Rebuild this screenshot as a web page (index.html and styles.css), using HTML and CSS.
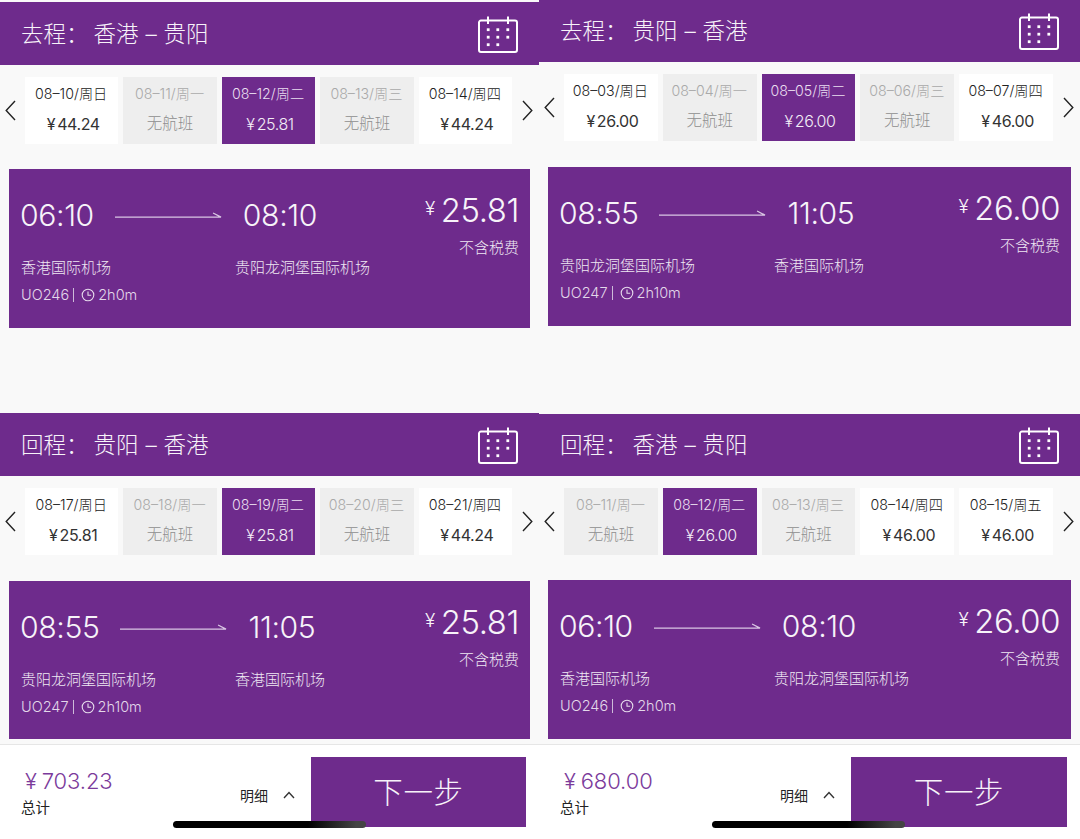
FILE: index.html
```html
<!DOCTYPE html>
<html lang="zh-CN">
<head>
<meta charset="utf-8">
<title>选择航班</title>
<link rel="stylesheet" href="styles.css">
</head>
<body>
<svg class="defs" width="0" height="0" aria-hidden="true">
  <symbol id="cal" viewBox="0 0 40 37">
    <path d="M3 4.5H37A2 2 0 0 1 39 6.5V34A2 2 0 0 1 37 36H3A2 2 0 0 1 1 34V6.5A2 2 0 0 1 3 4.5Z" fill="none" stroke="#fff" stroke-width="2"/>
    <path d="M10 0.5V8M30 0.5V8" stroke="#fff" stroke-width="2" fill="none"/>
    <g fill="#fff"><rect x="8.8" y="12.3" width="2.8" height="2.8"/><rect x="18.4" y="12.3" width="2.8" height="2.8"/><rect x="28.4" y="12.3" width="2.8" height="2.8"/><rect x="8.8" y="19.8" width="2.8" height="2.8"/><rect x="18.4" y="19.8" width="2.8" height="2.8"/><rect x="28.4" y="19.8" width="2.8" height="2.8"/><rect x="8.8" y="27.3" width="2.8" height="2.8"/><rect x="18.4" y="27.3" width="2.8" height="2.8"/></g>
  </symbol>
  <symbol id="left" viewBox="0 0 11 21"><path d="M10 1L1.2 10.5L10 20" fill="none" stroke="#222" stroke-width="1.4"/></symbol>
  <symbol id="right" viewBox="0 0 11 21"><path d="M1 1L9.8 10.5L1 20" fill="none" stroke="#222" stroke-width="1.4"/></symbol>
  <symbol id="arrow" viewBox="0 0 108 8"><path d="M0 6.2H107L99 2" fill="none" stroke="#d9c6e3" stroke-width="1.3"/></symbol>
  <symbol id="clock" viewBox="0 0 14 14"><circle cx="7" cy="7" r="5.8" fill="none" stroke="#e6dcec" stroke-width="1.1"/><path d="M7 3.4V7.3H10.2" fill="none" stroke="#e6dcec" stroke-width="1.1"/></symbol>
  <symbol id="up" viewBox="0 0 12 8"><path d="M1 7L6 1.6L11 7" fill="none" stroke="#333" stroke-width="1.4"/></symbol>
</svg>

<div class="screen">

<section class="panel panel-a">
  <div class="main">
    <div class="leg leg-first">
      <div class="head head-tall"><span class="route"><span class="route-kind">去程：</span>香港 – 贵阳</span><svg class="cal"><use href="#cal"/></svg></div>
      <div class="dates">
        <svg class="chev"><use href="#left"/></svg>
        <div class="days">
          <div class="day"><div class="d">08–10/周日</div><div class="p">¥ 44.24</div></div>
          <div class="day off"><div class="d">08–11/周一</div><div class="n">无航班</div></div>
          <div class="day on"><div class="d">08–12/周二</div><div class="p">¥ 25.81</div></div>
          <div class="day off"><div class="d">08–13/周三</div><div class="n">无航班</div></div>
          <div class="day"><div class="d">08–14/周四</div><div class="p">¥ 44.24</div></div>
        </div>
        <svg class="chev"><use href="#right"/></svg>
      </div>
      <div class="card">
        <div class="info">
          <div class="times"><span class="t">06:10</span><svg class="arrow"><use href="#arrow"/></svg><span class="t">08:10</span></div>
          <div class="ports"><span>香港国际机场</span><span>贵阳龙洞堡国际机场</span></div>
          <div class="flight"><span>UO246</span><i class="bar"></i><svg class="clock"><use href="#clock"/></svg><span>2h0m</span></div>
        </div>
        <div class="fare"><div class="amount"><span class="yen">¥</span>25.81</div><div class="tax">不含税费</div></div>
      </div>
    </div>
    <div class="leg">
      <div class="head head-tall"><span class="route"><span class="route-kind">回程：</span>贵阳 – 香港</span><svg class="cal"><use href="#cal"/></svg></div>
      <div class="dates">
        <svg class="chev"><use href="#left"/></svg>
        <div class="days">
          <div class="day"><div class="d">08–17/周日</div><div class="p">¥ 25.81</div></div>
          <div class="day off"><div class="d">08–18/周一</div><div class="n">无航班</div></div>
          <div class="day on"><div class="d">08–19/周二</div><div class="p">¥ 25.81</div></div>
          <div class="day off"><div class="d">08–20/周三</div><div class="n">无航班</div></div>
          <div class="day"><div class="d">08–21/周四</div><div class="p">¥ 44.24</div></div>
        </div>
        <svg class="chev"><use href="#right"/></svg>
      </div>
      <div class="card card-short">
        <div class="info">
          <div class="times"><span class="t">08:55</span><svg class="arrow"><use href="#arrow"/></svg><span class="t">11:05</span></div>
          <div class="ports"><span>贵阳龙洞堡国际机场</span><span>香港国际机场</span></div>
          <div class="flight"><span>UO247</span><i class="bar"></i><svg class="clock"><use href="#clock"/></svg><span>2h10m</span></div>
        </div>
        <div class="fare"><div class="amount"><span class="yen">¥</span>25.81</div><div class="tax">不含税费</div></div>
      </div>
    </div>
  </div>
  <div class="foot">
    <div class="total"><div class="sum">¥ 703.23</div><div class="sum-label">总计</div></div>
    <div class="detail"><span>明细</span><svg class="up"><use href="#up"/></svg></div>
    <div class="next">下一步</div>
  </div>
  <div class="home"></div>
</section>

<section class="panel panel-b">
  <div class="main">
    <div class="leg">
      <div class="head"><span class="route"><span class="route-kind">去程：</span>贵阳 – 香港</span><svg class="cal"><use href="#cal"/></svg></div>
      <div class="dates">
        <svg class="chev"><use href="#left"/></svg>
        <div class="days">
          <div class="day"><div class="d">08–03/周日</div><div class="p">¥ 26.00</div></div>
          <div class="day off"><div class="d">08–04/周一</div><div class="n">无航班</div></div>
          <div class="day on"><div class="d">08–05/周二</div><div class="p">¥ 26.00</div></div>
          <div class="day off"><div class="d">08–06/周三</div><div class="n">无航班</div></div>
          <div class="day"><div class="d">08–07/周四</div><div class="p">¥ 46.00</div></div>
        </div>
        <svg class="chev"><use href="#right"/></svg>
      </div>
      <div class="card card-low">
        <div class="info">
          <div class="times"><span class="t">08:55</span><svg class="arrow"><use href="#arrow"/></svg><span class="t">11:05</span></div>
          <div class="ports"><span>贵阳龙洞堡国际机场</span><span>香港国际机场</span></div>
          <div class="flight"><span>UO247</span><i class="bar"></i><svg class="clock"><use href="#clock"/></svg><span>2h10m</span></div>
        </div>
        <div class="fare"><div class="amount"><span class="yen">¥</span>26.00</div><div class="tax">不含税费</div></div>
      </div>
    </div>
    <div class="leg">
      <div class="head"><span class="route"><span class="route-kind">回程：</span>香港 – 贵阳</span><svg class="cal"><use href="#cal"/></svg></div>
      <div class="dates">
        <svg class="chev"><use href="#left"/></svg>
        <div class="days">
          <div class="day off"><div class="d">08–11/周一</div><div class="n">无航班</div></div>
          <div class="day on"><div class="d">08–12/周二</div><div class="p">¥ 26.00</div></div>
          <div class="day off"><div class="d">08–13/周三</div><div class="n">无航班</div></div>
          <div class="day"><div class="d">08–14/周四</div><div class="p">¥ 46.00</div></div>
          <div class="day"><div class="d">08–15/周五</div><div class="p">¥ 46.00</div></div>
        </div>
        <svg class="chev"><use href="#right"/></svg>
      </div>
      <div class="card">
        <div class="info">
          <div class="times"><span class="t">06:10</span><svg class="arrow"><use href="#arrow"/></svg><span class="t">08:10</span></div>
          <div class="ports"><span>香港国际机场</span><span>贵阳龙洞堡国际机场</span></div>
          <div class="flight"><span>UO246</span><i class="bar"></i><svg class="clock"><use href="#clock"/></svg><span>2h0m</span></div>
        </div>
        <div class="fare"><div class="amount"><span class="yen">¥</span>26.00</div><div class="tax">不含税费</div></div>
      </div>
    </div>
  </div>
  <div class="foot">
    <div class="total"><div class="sum">¥ 680.00</div><div class="sum-label">总计</div></div>
    <div class="detail"><span>明细</span><svg class="up"><use href="#up"/></svg></div>
    <div class="next">下一步</div>
  </div>
  <div class="home"></div>
</section>

</div>
</body>
</html>
```

FILE: styles.css
```css
* { box-sizing: border-box; }
html, body { margin: 0; padding: 0; }
body {
  width: 1080px;
  height: 839px;
  overflow: hidden;
  background: #fff;
  font-family: Inter, "Noto Sans CJK SC", sans-serif;
  font-weight: 300;
  color: #222;
}
.defs { position: absolute; }
.screen { display: grid; grid-template-columns: 539px 541px; height: 839px; }
.panel { position: relative; display: flex; flex-direction: column; height: 839px; background: #f9f9f9; }
.panel-a .leg-first { padding-top: 2px; background: #f9f9f9; }
.main { height: 744px; padding-bottom: 5px; display: flex; flex-direction: column; justify-content: space-between; }
.head {
  height: 62px;
  padding: 0 21px 0 21px;
  display: flex;
  align-items: center;
  justify-content: space-between;
  background: #6e2b8c;
  color: #f7f3f9;
}
.head-tall { height: 63px; }
.route { font-size: 22.5px; line-height: 30px; white-space: nowrap; word-spacing: 0.6px; }
.route-kind { display: inline-block; width: 72.5px; }
.panel-b .route { margin-top: -1px; }
.cal { width: 40px; height: 37px; margin-top: 1px; }
.dates { display: flex; align-items: center; height: 67px; margin-top: 12px; padding: 0 6px 0 5px; }
.chev { width: 11px; height: 21px; flex: none; }
.days { flex: 1; display: flex; gap: 5px; margin: 0 10px 0 9px; height: 67px; }
.day { flex: 1; background: #fff; text-align: center; color: #222; }
.d { font-size: 14.2px; line-height: 18px; margin-top: 8px; margin-left: -1px; white-space: nowrap; }
.p { font-size: 16px; line-height: 22px; margin-top: 10px; margin-left: 3px; font-weight: 400; letter-spacing: -0.4px; word-spacing: -2px; color: #333; }
.n { font-size: 15.5px; line-height: 22px; margin-top: 10px; color: #8f8f8f; }
.off { background: #eeeeee; }
.off .d { color: #a9a9a9; }
.on { background: #6e2b8c; }
.on .d { color: #eadff0; }
.on .p { color: #f3edf6; font-weight: 300; }
.card {
  height: 159px;
  margin: 25px 9px 0;
  padding: 0 11px 0 12px;
  background: #6e2b8c;
  display: flex;
  justify-content: space-between;
  color: #f7f3f9;
}
.card-short { height: 158px; margin-top: 26px; }
.card-low { margin-top: 26px; }
.times { display: flex; align-items: center; gap: 21px; height: 38px; margin-top: 27px; margin-left: -1px; }
.t { font-size: 30.2px; line-height: 38px; letter-spacing: -0.4px; }
.arrow { width: 107px; height: 8px; margin-top: -1px; }
.ports { display: grid; grid-template-columns: 214px auto; margin-top: 24px; font-size: 15px; line-height: 20px; color: #efe8f3; }
.flight { display: flex; align-items: center; margin-top: 7px; font-size: 14.5px; line-height: 20px; color: #e3d8ea; }
.bar { width: 1px; height: 14px; margin: 0 7px 0 4px; background: #cdbbd9; }
.clock { width: 14px; height: 14px; margin-right: 3px; }
.fare { text-align: right; padding-top: 19px; }
.amount { font-size: 32.8px; line-height: 42px; letter-spacing: -0.4px; white-space: nowrap; }
.yen { font-size: 19px; vertical-align: 7px; margin-right: 6px; }
.tax { font-size: 15px; line-height: 20px; margin-top: 7px; color: #efe8f3; }
.foot { flex: 1; display: flex; align-items: flex-start; background: #fff; border-top: 1px solid #e6e6e6; padding: 12px 13px 0 21px; }
.total { padding-top: 11px; }
.sum { font-size: 22px; line-height: 27px; color: #7b3a9b; padding-left: 4px; white-space: nowrap; word-spacing: -1.2px; letter-spacing: -0.1px; }
.sum-label { font-size: 14.5px; line-height: 20px; margin-top: 3px; color: #222; font-weight: 400; }
.detail { margin-left: auto; margin-right: 16px; display: flex; align-items: center; gap: 15px; height: 28px; margin-top: 24px; font-size: 14px; color: #222; font-weight: 400; }
.up { width: 12px; height: 8px; }
.next { width: 216px; height: 70px; background: #6e2b8c; color: #f7f3f9; font-size: 29.5px; line-height: 71px; text-align: center; letter-spacing: 0.6px; }
.panel-a .next { width: 215px; }
.home { position: absolute; left: 173px; top: 821px; width: 193px; height: 7px; border-radius: 3.5px; background: linear-gradient(90deg, #000 0, #000 70%, #444 95%); }
```
